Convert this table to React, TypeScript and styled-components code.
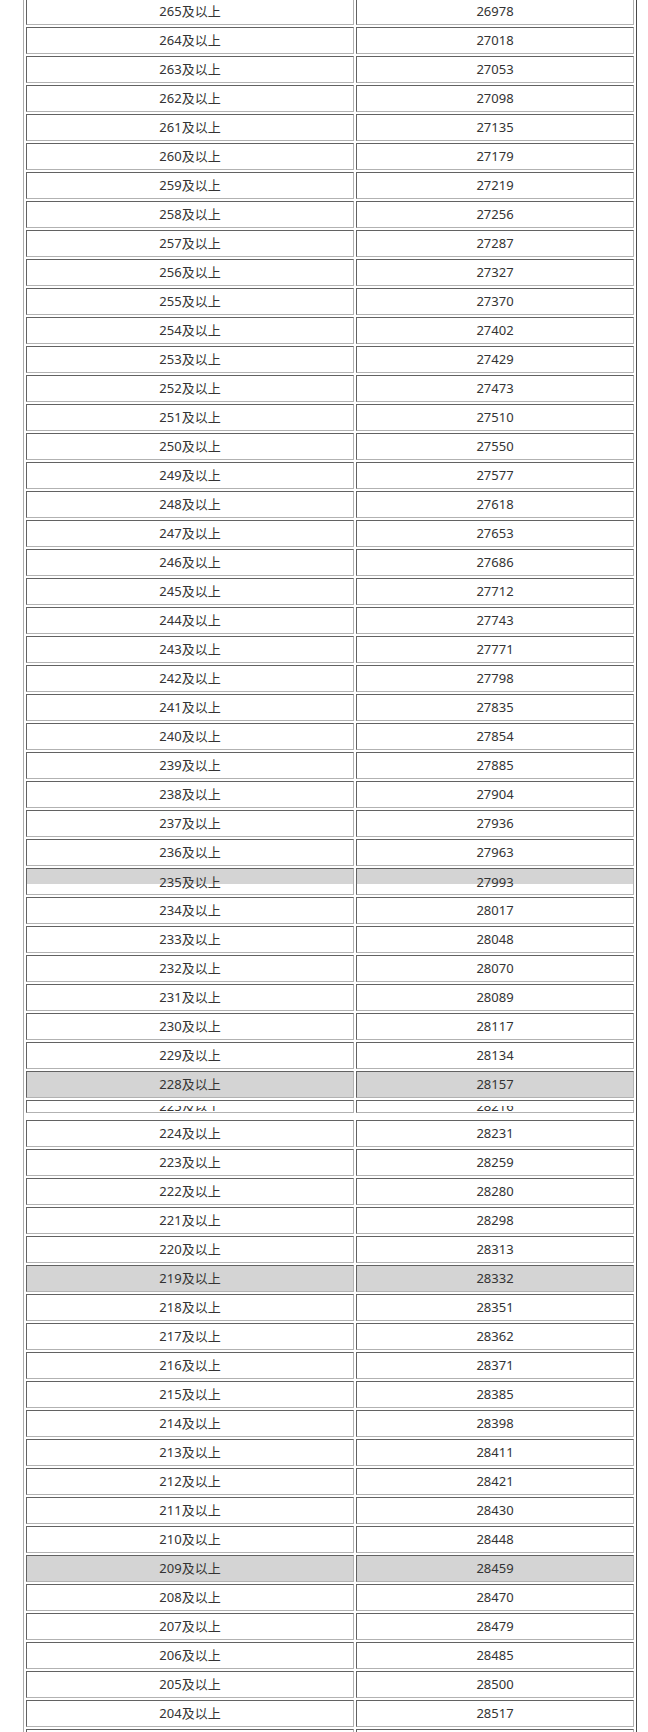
import styled, { createGlobalStyle, css } from 'styled-components';

type Shade = 'none' | 'full' | 'band';

interface ScoreRow {
  score: string;
  rank: string;
  shade?: Shade;
  cut?: boolean;
}

const rows: ScoreRow[] = [
  { score: '265', rank: '26978' },
  { score: '264', rank: '27018' },
  { score: '263', rank: '27053' },
  { score: '262', rank: '27098' },
  { score: '261', rank: '27135' },
  { score: '260', rank: '27179' },
  { score: '259', rank: '27219' },
  { score: '258', rank: '27256' },
  { score: '257', rank: '27287' },
  { score: '256', rank: '27327' },
  { score: '255', rank: '27370' },
  { score: '254', rank: '27402' },
  { score: '253', rank: '27429' },
  { score: '252', rank: '27473' },
  { score: '251', rank: '27510' },
  { score: '250', rank: '27550' },
  { score: '249', rank: '27577' },
  { score: '248', rank: '27618' },
  { score: '247', rank: '27653' },
  { score: '246', rank: '27686' },
  { score: '245', rank: '27712' },
  { score: '244', rank: '27743' },
  { score: '243', rank: '27771' },
  { score: '242', rank: '27798' },
  { score: '241', rank: '27835' },
  { score: '240', rank: '27854' },
  { score: '239', rank: '27885' },
  { score: '238', rank: '27904' },
  { score: '237', rank: '27936' },
  { score: '236', rank: '27963' },
  { score: '235', rank: '27993', shade: 'band' },
  { score: '234', rank: '28017' },
  { score: '233', rank: '28048' },
  { score: '232', rank: '28070' },
  { score: '231', rank: '28089' },
  { score: '230', rank: '28117' },
  { score: '229', rank: '28134' },
  { score: '228', rank: '28157', shade: 'full' },
  { score: '225', rank: '28216', cut: true },
  { score: '224', rank: '28231' },
  { score: '223', rank: '28259' },
  { score: '222', rank: '28280' },
  { score: '221', rank: '28298' },
  { score: '220', rank: '28313' },
  { score: '219', rank: '28332', shade: 'full' },
  { score: '218', rank: '28351' },
  { score: '217', rank: '28362' },
  { score: '216', rank: '28371' },
  { score: '215', rank: '28385' },
  { score: '214', rank: '28398' },
  { score: '213', rank: '28411' },
  { score: '212', rank: '28421' },
  { score: '211', rank: '28430' },
  { score: '210', rank: '28448' },
  { score: '209', rank: '28459', shade: 'full' },
  { score: '208', rank: '28470' },
  { score: '207', rank: '28479' },
  { score: '206', rank: '28485' },
  { score: '205', rank: '28500' },
  { score: '204', rank: '28517' },
  { score: '203', rank: '28530' },
];

const CellText = ({ text, cut }: { text: string; cut?: boolean }) =>
  cut ? (
    <CutText>
      <CutLine>{text}</CutLine>
    </CutText>
  ) : (
    <>{text}</>
  );

const App = () => {
  return (
    <>
      <GlobalStyle />
      <Table>
        {rows.map(row => (
          <Row key={row.score} $cut={row.cut}>
            <Cell $shade={row.shade ?? 'none'} $cut={row.cut} $width={328}>
              <CellText text={`${row.score}及以上`} cut={row.cut} />
            </Cell>
            <Cell $shade={row.shade ?? 'none'} $cut={row.cut}>
              <CellText text={row.rank} cut={row.cut} />
            </Cell>
          </Row>
        ))}
      </Table>
    </>
  );
};

export default App;

const GlobalStyle = createGlobalStyle`
  html, body {
    margin: 0;
    padding: 0;
    background: #ffffff;
    overflow: hidden;
  }
  body {
    font-family: "Noto Sans", "Noto Sans CJK SC", sans-serif;
  }
`;

const Table = styled.div`
  box-sizing: border-box;
  width: 614px;
  margin: -2px 0 0 23px;
  padding: 0 2px;
  display: flex;
  flex-direction: column;
  gap: 2px;
  border-left: 1px solid #adadad;
  border-right: 1px solid #4a4a4a;
`;

const Row = styled.div<{ $cut?: boolean }>`
  display: flex;
  gap: 2px;
  ${props =>
    props.$cut &&
    css`
      margin-bottom: 5px;
    `}
`;

const Cell = styled.div<{ $shade: Shade; $cut?: boolean; $width?: number }>`
  box-sizing: border-box;
  height: ${props => (props.$cut ? '13px' : '27px')};
  ${props => (props.$width ? `width: ${props.$width}px; flex: none;` : 'flex: 1;')}
  display: flex;
  align-items: ${props => (props.$cut ? 'flex-end' : 'center')};
  justify-content: center;
  overflow: hidden;
  border: 1px solid;
  border-color: #626262 #b2b2b2 #b2b2b2 #626262;
  font-size: 13px;
  line-height: 17px;
  color: #333333;
  background: ${props =>
    props.$shade === 'full'
      ? '#d4d4d4'
      : props.$shade === 'band'
        ? 'linear-gradient(to bottom, #d4d4d4 0, #d4d4d4 15px, #ffffff 15px)'
        : '#ffffff'};
  ${props =>
    props.$shade === 'band' &&
    css`
      padding-top: 2px;
    `}
  ${props =>
    props.$cut &&
    css`
      padding-bottom: 1px;
    `}
`;

const CutText = styled.span`
  display: block;
  height: 5px;
  overflow: hidden;
`;

const CutLine = styled.span`
  display: block;
  margin-top: -8px;
  line-height: 17px;
  white-space: nowrap;
`;
